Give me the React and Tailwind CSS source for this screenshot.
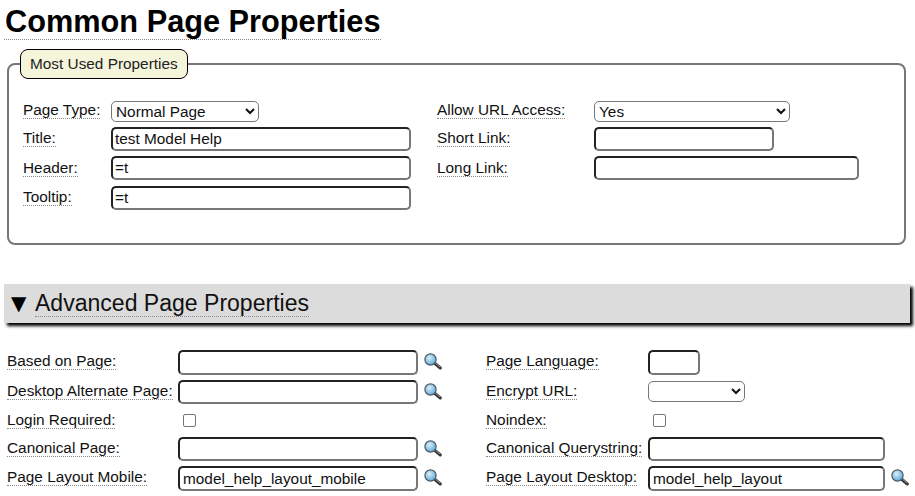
import React from "react";

const Label = ({ children, className = "" }) => (
  <span className={"block w-max h-[20px] leading-[22px] border-b border-dotted border-[#888] text-[15.36px] text-[#111] whitespace-nowrap " + className}>{children}</span>
);

const Input = ({ w, value = "", className = "" }) => (
  <input
    readOnly
    value={value}
    className={"block h-[24px] box-border rounded-[5px] border-2 border-t-[#222] border-l-[#222] border-r-[#777] border-b-[#777] bg-white px-[2px] text-[15.36px] leading-[20px] text-[#111] outline-none " + w + " " + className}
  />
);

const Select = ({ w, value, options, className = "" }) => (
  <select
    defaultValue={value}
    className={"block h-[21px] box-border rounded-[5px] border border-[#777] bg-white text-[15.36px] leading-[18px] text-[#111] " + w + " " + className}
  >
    {options.map((o) => <option key={o}>{o}</option>)}
  </select>
);

const Check = ({ className = "" }) => (
  <span className={"block w-[13px] h-[13px] box-border rounded-[2px] border border-[#767676] bg-white " + className} />
);

const Search = () => (
  <svg width="18" height="17" viewBox="0 0 18 17" className="ml-[6px] mt-[3px] shrink-0">
    <defs>
      <radialGradient id="lens" cx="0.4" cy="0.35" r="0.7">
        <stop offset="0" stopColor="#d8eefa" />
        <stop offset="1" stopColor="#5aa6d6" />
      </radialGradient>
    </defs>
    <path d="M11 10.5 L16.3 15" stroke="#333" strokeWidth="3" strokeLinecap="round" />
    <path d="M11.5 10.2 L16 14" stroke="#999" strokeWidth="1" strokeLinecap="round" />
    <circle cx="6.5" cy="6.5" r="5.6" fill="url(#lens)" stroke="#4a5a66" strokeWidth="1.2" />
  </svg>
);

export default function App() {
  return (
    <div className="w-[915px] h-[496px] overflow-hidden bg-white text-[#111] font-['Liberation_Sans',Arial,sans-serif]">
      <h1 className="ml-[4px] w-max h-[40px] pl-[1px] border-b border-dotted border-[#888] text-[30.72px] leading-[44px] font-bold text-black whitespace-nowrap">
        Common Page Properties
      </h1>

      <fieldset className="ml-[7px] mt-[9px] w-[899px] h-[196px] box-border rounded-[8px] border-2 border-[#777] px-[14px]">
        <legend className="ml-[-3px] mr-auto h-[30px] w-[168px] box-border rounded-[8px] border border-black bg-[#f5f5dc] pl-[9px] text-left text-[15.36px] leading-[27px] text-[#222] whitespace-nowrap">
          Most Used Properties
        </legend>
        <div className="grid grid-cols-[88px_326px_157px_1fr] grid-rows-[28px_29px_30px_24px] mt-[20px]">
          <div><Label>Page Type:</Label></div>
          <div><Select w="w-[148px]" className="mt-[2px]" value="Normal Page" options={["Normal Page"]} /></div>
          <div><Label>Allow URL Access:</Label></div>
          <div><Select w="w-[196px]" className="mt-[2px]" value="Yes" options={["Yes"]} /></div>

          <div><Label>Title:</Label></div>
          <div><Input w="w-[300px]" value="test Model Help" /></div>
          <div><Label>Short Link:</Label></div>
          <div><Input w="w-[180px]" /></div>

          <div className="pt-[1px]"><Label>Header:</Label></div>
          <div><Input w="w-[300px]" value="=t" /></div>
          <div className="pt-[1px]"><Label>Long Link:</Label></div>
          <div><Input w="w-[265px]" /></div>

          <div><Label>Tooltip:</Label></div>
          <div><Input w="w-[300px]" value="=t" /></div>
          <div />
          <div />
        </div>
      </fieldset>

      <div className="ml-[4px] mt-[39px] w-[906px] h-[39px] flex items-start bg-[#dcdcdc] shadow-[3px_3px_3px_#000]">
        <span className="ml-[7px] mt-[7px] w-[24px] text-[20px] leading-[24px] text-black font-['DejaVu_Sans',sans-serif]">▼</span>
        <h2 className="mt-[3px] h-[30px] border-b border-dotted border-[#888] text-[23.04px] leading-[32px] font-normal text-[#111] whitespace-nowrap">
          Advanced Page Properties
        </h2>
      </div>

      <div className="ml-[7px] mt-[27px] grid grid-cols-[171px_308px_162px_1fr] grid-rows-[30px_29px_28px_29px_25px]">
        <div><Label>Based on Page:</Label></div>
        <div className="flex items-start"><Input w="w-[240px]" className="h-[25px]" /><Search /></div>
        <div><Label>Page Language:</Label></div>
        <div><Input w="w-[52px]" className="h-[25px]" /></div>

        <div><Label>Desktop Alternate Page:</Label></div>
        <div className="flex items-start"><Input w="w-[240px]" /><Search /></div>
        <div><Label>Encrypt URL:</Label></div>
        <div><Select w="w-[97px]" className="mt-[1px]" value="" options={[""]} /></div>

        <div><Label>Login Required:</Label></div>
        <div className="pl-[5px] pt-[5px]"><Check /></div>
        <div><Label>Noindex:</Label></div>
        <div className="pl-[5px] pt-[5px]"><Check /></div>

        <div><Label>Canonical Page:</Label></div>
        <div className="flex items-start"><Input w="w-[240px]" /><Search /></div>
        <div><Label>Canonical Querystring:</Label></div>
        <div><Input w="w-[237px]" /></div>

        <div><Label>Page Layout Mobile:</Label></div>
        <div className="flex items-start"><Input w="w-[240px]" className="h-[25px] pl-[3px]" value="model_help_layout_mobile" /><Search /></div>
        <div><Label>Page Layout Desktop:</Label></div>
        <div className="flex items-start"><Input w="w-[237px]" className="h-[25px] pl-[3px]" value="model_help_layout" /><Search /></div>
      </div>
    </div>
  );
}
